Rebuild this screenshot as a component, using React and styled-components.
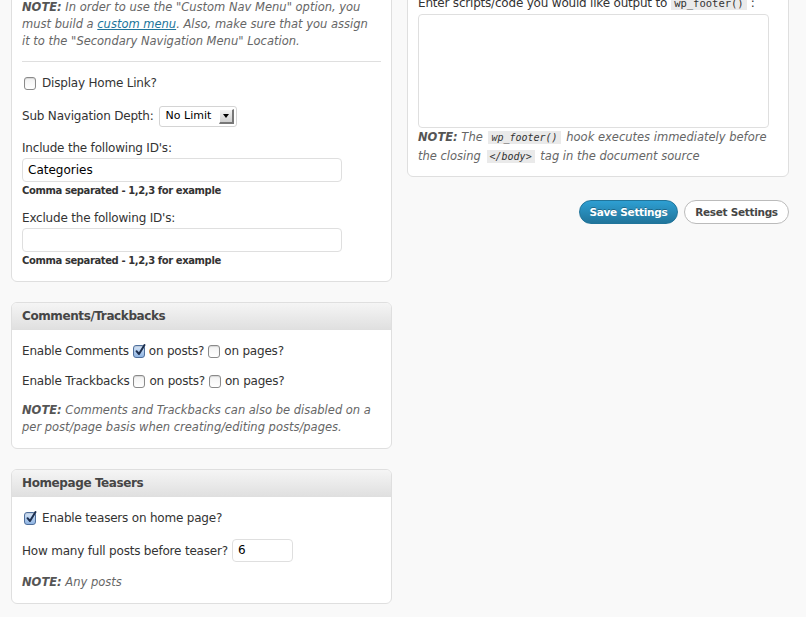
import React from 'react';
import styled, { createGlobalStyle } from 'styled-components';

const GlobalStyle = createGlobalStyle`
  html, body {
    margin: 0;
    padding: 0;
    background: #f9f9f9;
    overflow: hidden;
  }
  body {
    font-family: "DejaVu Sans", "Liberation Sans", sans-serif;
    font-size: 12px;
    letter-spacing: -0.2px;
    color: #333;
  }
`;

const Page = styled.div`
  display: flex;
  align-items: flex-start;
  gap: 15px;
  margin-top: -14px;
  padding: 0 17px 0 11px;
  width: 806px;
  box-sizing: border-box;
`;

const Column = styled.div`
  display: flex;
  flex-direction: column;
  gap: ${(p) => p.$gap ?? 20}px;
  width: ${(p) => p.$width}px;
  flex-shrink: 0;
`;

const Panel = styled.div`
  background: #fff;
  border: 1px solid #dfdfdf;
  border-radius: 6px;
  overflow: hidden;
`;

const PanelHeader = styled.div`
  height: 26px;
  line-height: 27px;
  padding: 0 10px;
  background: linear-gradient(#f5f5f5, #e0e0e0);
  border-bottom: 1px solid #dfdfdf;
  font-weight: bold;
  color: #464646;
  font-size: 12px;
  letter-spacing: -0.4px;
`;

const PanelBody = styled.div`
  padding: ${(p) => p.$pad || '12px 10px'};
  display: flex;
  flex-direction: column;
`;

const Note = styled.p`
  margin: 0;
  max-width: ${(p) => p.$maxw || 'none'};
  font-style: italic;
  color: #666;
  letter-spacing: 0;
  line-height: ${(p) => p.$lh || 17}px;
  font-size: 11.5px;
  b { color: #555; }
  a { color: #21759b; text-decoration: underline; }
`;

const Divider = styled.hr`
  border: 0;
  border-top: 1px solid #dfdfdf;
  margin: 11px 0 12px;
`;

const Row = styled.div`
  display: flex;
  align-items: center;
  gap: ${(p) => p.$gap ?? 5}px;
  min-height: ${(p) => p.$h || 18}px;
  line-height: 18px;
  margin-bottom: ${(p) => p.$mb ?? 12}px;
`;

const Label = styled.div`
  line-height: 18px;
  margin-bottom: 1px;
`;

const TextInput = styled.div`
  box-sizing: border-box;
  width: ${(p) => p.$width}px;
  height: ${(p) => p.$height || 24}px;
  border: 1px solid #dfdfdf;
  border-radius: 4px;
  background: #fff;
  padding: 0 5px;
  line-height: ${(p) => (p.$height || 24) - 2}px;
  color: #000;
  font-size: 12px;
  letter-spacing: 0;
`;

const Hint = styled.div`
  font-size: 10px;
  font-weight: bold;
  letter-spacing: -0.4px;
  color: #333;
  line-height: 16px;
  margin-top: 1px;
  margin-bottom: ${(p) => p.$mb ?? 0}px;
`;

const Select = styled.div`
  box-sizing: border-box;
  width: 78px;
  height: 21px;
  border: 1px solid #d4d4d4;
  border-radius: 3px;
  background: #fff;
  display: flex;
  align-items: center;
  justify-content: space-between;
  padding: 0 2px 0 6px;
  font-size: 11px;
  letter-spacing: 0;
  color: #000;
`;

const SelectArrow = styled.span`
  width: 15px;
  height: 15px;
  box-sizing: border-box;
  background: linear-gradient(#f3f3f3, #cfcfcf);
  border-right: 2px solid #777;
  border-bottom: 2px solid #777;
  border-top: 1px solid #fff;
  border-left: 1px solid #fff;
  display: flex;
  align-items: center;
  justify-content: center;
  &::after {
    content: '';
    border-left: 3px solid transparent;
    border-right: 3px solid transparent;
    border-top: 4px solid #000;
  }
`;

const Box = styled.span`
  position: relative;
  box-sizing: border-box;
  width: 12px;
  height: 13px;
  border-radius: 3px;
  flex-shrink: 0;
  margin-left: ${(p) => p.$ml || 0}px;
  border: 1px solid ${(p) => (p.$checked ? '#4f6f9c' : '#8a8a8a')};
  background: ${(p) =>
    p.$checked
      ? 'linear-gradient(#d7e6f8, #8fb4e2)'
      : 'linear-gradient(#f2f2f2, #ffffff)'};
  box-shadow: inset 0 1px 1px rgba(0, 0, 0, 0.12);
  svg {
    position: absolute;
    left: 0px;
    top: -3px;
  }
`;

const Checkbox = ({ checked, ml }) => (
  <Box $checked={checked} $ml={ml}>
    {checked && (
      <svg width="13" height="14" viewBox="0 0 13 14">
        <path
          d="M2.5 8.2 L5 11 L10.5 2"
          fill="none"
          stroke="#1d2f4f"
          strokeWidth="2"
          strokeLinecap="round"
          strokeLinejoin="round"
        />
      </svg>
    )}
  </Box>
);

const Code = styled.code`
  font-family: "DejaVu Sans Mono", "Liberation Mono", monospace;
  font-size: ${(p) => p.$size || 10.5}px;
  letter-spacing: 0;
  background: #eaeaea;
  padding: 1px 3px;
  margin: 0 ${(p) => p.$mx ?? 2}px;
  color: #333;
`;

const TextArea = styled.div`
  box-sizing: border-box;
  width: 351px;
  height: 114px;
  border: 1px solid #dfdfdf;
  border-radius: 4px;
  background: #fff;
  margin-top: 1px;
`;

const Buttons = styled.div`
  display: flex;
  justify-content: flex-end;
  gap: 6px;
`;

const Button = styled.button`
  box-sizing: border-box;
  height: 24px;
  width: ${(p) => p.$width}px;
  border-radius: 12px;
  font-family: "DejaVu Sans", "Liberation Sans", sans-serif;
  font-size: 10.5px;
  letter-spacing: -0.3px;
  font-weight: bold;
  padding: 0;
  cursor: pointer;
  border: 1px solid ${(p) => (p.$primary ? '#21759b' : '#bbb')};
  color: ${(p) => (p.$primary ? '#fff' : '#464646')};
  background: ${(p) =>
    p.$primary ? 'linear-gradient(#2e9fd2, #21759b)' : '#fff'};
  text-shadow: ${(p) => (p.$primary ? '0 -1px 0 rgba(0,0,0,0.3)' : 'none')};
`;

export default function App() {
  return (
    <>
      <GlobalStyle />
      <Page>
        <Column $width={381}>
          <Panel>
            <PanelBody>
              <Note $maxw="352px">
                <b>NOTE:</b> In order to use the "Custom Nav Menu" option, you
                must build a <a>custom menu</a>. Also, make sure that you assign
                it to the "Secondary Navigation Menu" Location.
              </Note>
              <Divider />
              <Row $gap={6} $mb={13}>
                <Checkbox ml={2} />
                <span>Display Home Link?</span>
              </Row>
              <Row $gap={5} $h={22}>
                <span>Sub Navigation Depth:</span>
                <Select>
                  <span>No Limit</span>
                  <SelectArrow />
                </Select>
              </Row>
              <Label>Include the following ID's:</Label>
              <TextInput $width={320}>Categories</TextInput>
              <Hint $mb={10}>Comma separated - 1,2,3 for example</Hint>
              <Label>Exclude the following ID's:</Label>
              <TextInput $width={320} />
              <Hint>Comma separated - 1,2,3 for example</Hint>
            </PanelBody>
          </Panel>

          <Panel>
            <PanelHeader>Comments/Trackbacks</PanelHeader>
            <PanelBody>
              <Row $gap={4}>
                <span>Enable Comments</span>
                <Checkbox checked />
                <span>on posts?</span>
                <Checkbox />
                <span>on pages?</span>
              </Row>
              <Row $gap={4}>
                <span>Enable Trackbacks</span>
                <Checkbox />
                <span>on posts?</span>
                <Checkbox />
                <span>on pages?</span>
              </Row>
              <Note>
                <b>NOTE:</b> Comments and Trackbacks can also be disabled on a
                per post/page basis when creating/editing posts/pages.
              </Note>
            </PanelBody>
          </Panel>

          <Panel>
            <PanelHeader>Homepage Teasers</PanelHeader>
            <PanelBody>
              <Row $gap={6}>
                <Checkbox checked ml={2} />
                <span>Enable teasers on home page?</span>
              </Row>
              <Row $gap={4}>
                <span>How many full posts before teaser?</span>
                <TextInput $width={61} $height={23}>6</TextInput>
              </Row>
              <Note>
                <b>NOTE:</b> Any posts
              </Note>
            </PanelBody>
          </Panel>
        </Column>

        <Column $width={382} $gap={23}>
          <Panel>
            <PanelBody $pad="7px 10px 10px">
              <Label>
                Enter scripts/code you would like output to
                <Code $size={10.5} $mx={4}>wp_footer()</Code>:
              </Label>
              <TextArea />
              <Note $lh={18}>
                <b>NOTE:</b> The <Code $size={10}>wp_footer()</Code> hook
                executes immediately before the closing{' '}
                <Code $size={10}>&lt;/body&gt;</Code> tag in the document source
              </Note>
            </PanelBody>
          </Panel>
          <Buttons>
            <Button $primary $width={99}>Save Settings</Button>
            <Button $width={105}>Reset Settings</Button>
          </Buttons>
        </Column>
      </Page>
    </>
  );
}
